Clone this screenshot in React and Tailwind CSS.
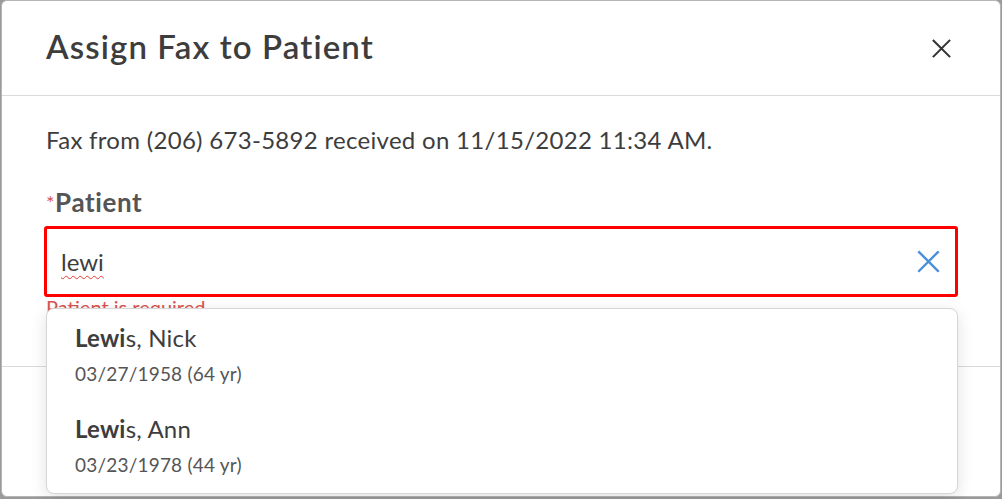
import React from 'react';

const font = { fontFamily: 'Lato, "Open Sans", sans-serif' };

const results = [
  { rest: 's, Nick', dob: '03/27/1958 (64 yr)' },
  { rest: 's, Ann', dob: '03/23/1978 (44 yr)' },
];

const CloseIcon = ({ className, width = 2.2 }) => (
  <svg viewBox="0 0 24 24" fill="none" stroke="currentColor" strokeWidth={width} strokeLinecap="square" className={className}>
    <path d="M3 3L21 21M21 3L3 21" />
  </svg>
);

export default function App() {
  return (
    <div className="h-[499px] w-[1002px] overflow-hidden bg-[#9a9a9a] px-px" style={font}>
      <div className="relative flex h-[497px] flex-col rounded-[6px] border border-[#b5b5b5] bg-white">
        {/* header */}
        <div className="flex h-[95px] shrink-0 items-center justify-between border-b border-[#dadada] pl-[44px] pr-[48px]">
          <h2 className="mt-[-5px] text-[33px] font-semibold leading-[40px] tracking-[1.1px] text-[#3d3d3d]">Assign Fax to Patient</h2>
          <button type="button" className="text-[#333]">
            <CloseIcon className="h-[21px] w-[21px]" width={2.4} />
          </button>
        </div>

        {/* body */}
        <div className="relative h-[271px] shrink-0 border-b border-[#dadada] px-[44px] pt-[29px]">
          <p className="text-[24px] leading-[30px] tracking-[0.3px] text-[#3d3d3d]">
            Fax from (206) 673-5892 received on 11/15/2022 11:34 AM.
          </p>

          <div className="mt-[32px] flex items-start text-[26px] font-bold leading-[30px] tracking-[0.6px] text-[#555]">
            <span className="text-[20px] font-normal text-[#d9534f]">*</span>
            <span>Patient</span>
          </div>

          <div className="-mx-[2px] mt-[9px] flex h-[71px] items-center justify-between rounded-[3px] border-[3px] border-[#ff0000] pl-[14px] pr-[14px]">
            <span className="text-[24px] text-[#3d3d3d] underline decoration-[#e53935] decoration-wavy decoration-1 underline-offset-[4px]">lewi</span>
            <CloseIcon className="h-[25px] w-[25px] text-[#4a90d9]" width={2.3} />
          </div>

          <p className="text-[20px] leading-[20px] text-[#d9534f]">Patient is required</p>

          {/* suggestions */}
          <div className="absolute left-[44px] top-[212px] z-10 w-[912px] rounded-[8px] border border-[#d6d6d6] bg-white pb-[2px] shadow-[0_4px_16px_rgba(0,0,0,0.12)]">
            {results.map((r) => (
              <div key={r.dob} className="px-[28px] py-[15px]">
                <div className="text-[24px] leading-[28px] tracking-[0.2px] text-[#3d3d3d]">
                  <span className="font-bold">Lewi</span>
                  {r.rest}
                </div>
                <div className="mt-[11px] text-[19px] leading-[22px] tracking-[0.2px] text-[#555]">{r.dob}</div>
              </div>
            ))}
          </div>
        </div>

        {/* footer */}
        <div className="flex-1" />
      </div>
    </div>
  );
}
